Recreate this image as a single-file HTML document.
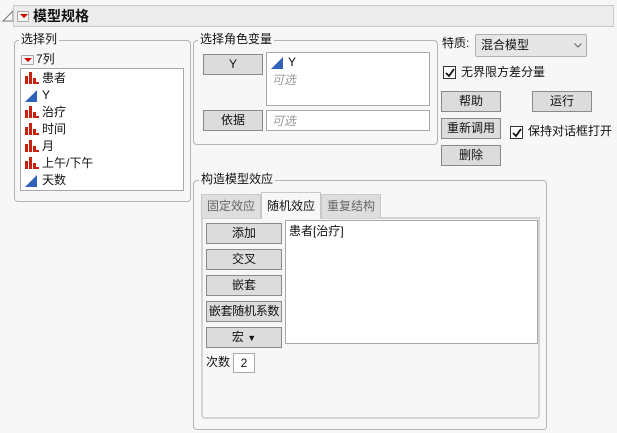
<!DOCTYPE html>
<html><head><meta charset="utf-8"><style>
*{box-sizing:border-box;margin:0;padding:0}
body{width:617px;height:433px;background:#f7f7f7;font-family:"Liberation Sans","Noto Sans CJK SC",sans-serif;font-size:12px;color:#111;position:relative;overflow:hidden}
.a{position:absolute}
.fs{position:absolute;border:1px solid #b4b4b4;border-radius:4px}
.lg{position:absolute;background:#f7f7f7;padding:0 2px;line-height:14px;font-size:12px}
.btn{position:absolute;background:#dcdcdc;border:1px solid #8a8a8a;text-align:center;line-height:18px;font-size:12px}
.box{position:absolute;background:#fff;border:1px solid #a8a8a8}
.rb{position:absolute;width:13px;height:10px;border:1px solid #aaa;background:#f4f4f4;border-radius:1px}
.rb:after{content:"";position:absolute;left:2px;top:2px;border-left:4px solid transparent;border-right:4px solid transparent;border-top:4px solid #c00}
.bar{position:absolute;width:14px;height:12px}
.cb{position:absolute;width:13px;height:13px;border:1px solid #333;background:#fff}
.item{position:absolute;left:22px;height:17px;line-height:17px}
.item span{position:absolute;left:20px;white-space:nowrap}
</style></head><body>
<!-- header -->
<svg class="a" style="left:2px;top:10px" width="12" height="12"><path d="M1 11 L11 11 L11 1 Z" fill="none" stroke="#777"/></svg>
<div class="a" style="left:13px;top:5px;width:601px;height:22px;background:#ececec;border:1px solid #c8c8c8"></div>
<div class="rb" style="left:17px;top:11px;width:12px;height:11px"></div>
<div class="a" style="left:33px;top:7px;font-size:14px;font-weight:bold;line-height:18px">模型规格</div>

<!-- 选择列 -->
<div class="fs" style="left:14px;top:40px;width:177px;height:162px"></div>
<div class="lg" style="left:19px;top:32px">选择列</div>
<div class="rb" style="left:21px;top:55px"></div>
<div class="a" style="left:36px;top:52px;line-height:14px">7列</div>
<div class="box" style="left:20px;top:68px;width:164px;height:123px"></div>
<svg width="0" height="0" style="position:absolute"><defs>
<g id="b"><rect x="0" y="4" width="3" height="8" fill="#c8220e"/><rect x="4" y="0" width="3" height="12" fill="#c8220e"/><rect x="8" y="6" width="3" height="6" fill="#c8220e"/><rect x="11" y="10" width="3" height="2" fill="#c8220e"/></g>
<g id="t"><path d="M0 12 L12 12 L12 0 Z" fill="#2f62b8"/></g></defs></svg>
<div class="item" style="top:70px"><svg class="a" style="left:3px;top:2px" width="14" height="12"><use href="#b"/></svg><span>患者</span></div>
<div class="item" style="top:87px"><svg class="a" style="left:3px;top:3px" width="14" height="12"><use href="#t"/></svg><span>Y</span></div>
<div class="item" style="top:104px"><svg class="a" style="left:3px;top:2px" width="14" height="12"><use href="#b"/></svg><span>治疗</span></div>
<div class="item" style="top:121px"><svg class="a" style="left:3px;top:2px" width="14" height="12"><use href="#b"/></svg><span>时间</span></div>
<div class="item" style="top:138px"><svg class="a" style="left:3px;top:2px" width="14" height="12"><use href="#b"/></svg><span>月</span></div>
<div class="item" style="top:155px"><svg class="a" style="left:3px;top:2px" width="14" height="12"><use href="#b"/></svg><span>上午/下午</span></div>
<div class="item" style="top:172px"><svg class="a" style="left:3px;top:3px" width="14" height="12"><use href="#t"/></svg><span>天数</span></div>

<!-- 选择角色变量 -->
<div class="fs" style="left:193px;top:40px;width:245px;height:105px"></div>
<div class="lg" style="left:198px;top:32px">选择角色变量</div>
<div class="btn" style="left:203px;top:54px;width:60px;height:21px">Y</div>
<div class="box" style="left:266px;top:52px;width:164px;height:54px"></div>
<svg class="a" style="left:271px;top:57px" width="12" height="12"><use href="#t"/></svg>
<div class="a" style="left:288px;top:55px;line-height:14px">Y</div>
<div class="a" style="left:272px;top:73px;color:#999;font-style:italic;line-height:14px">可选</div>
<div class="btn" style="left:203px;top:110px;width:60px;height:21px">依据</div>
<div class="box" style="left:266px;top:110px;width:164px;height:21px"></div>
<div class="a" style="left:272px;top:114px;color:#999;font-style:italic;line-height:14px">可选</div>

<!-- right -->
<div class="a" style="left:442px;top:36px;line-height:14px">特质:</div>
<div class="a" style="left:475px;top:34px;width:112px;height:23px;background:#e6e6e6;border:1px solid #b0b0b0;border-radius:2px"></div>
<div class="a" style="left:481px;top:38px;line-height:15px">混合模型</div>
<svg class="a" style="left:574px;top:43px" width="8" height="5"><path d="M0.5 0.5 L4 4 L7.5 0.5" fill="none" stroke="#666"/></svg>
<div class="cb" style="left:443px;top:66px"></div>
<svg class="a" style="left:445px;top:68px" width="10" height="10"><path d="M1 5 L4 8 L9 1" fill="none" stroke="#111" stroke-width="1.8"/></svg>
<div class="a" style="left:461px;top:65px;line-height:14px">无界限方差分量</div>
<div class="btn" style="left:441px;top:91px;width:60px;height:21px">帮助</div>
<div class="btn" style="left:532px;top:91px;width:60px;height:21px">运行</div>
<div class="btn" style="left:441px;top:118px;width:60px;height:21px">重新调用</div>
<div class="cb" style="left:510px;top:126px"></div>
<svg class="a" style="left:512px;top:128px" width="10" height="10"><path d="M1 5 L4 8 L9 1" fill="none" stroke="#111" stroke-width="1.8"/></svg>
<div class="a" style="left:528px;top:124px;line-height:14px">保持对话框打开</div>
<div class="btn" style="left:441px;top:145px;width:60px;height:21px">删除</div>

<!-- 构造模型效应 -->
<div class="fs" style="left:193px;top:180px;width:354px;height:250px"></div>
<div class="lg" style="left:199px;top:172px">构造模型效应</div>
<div class="a" style="left:201px;top:217px;width:339px;height:202px;border:2px solid #d4d4d4;border-radius:0 0 4px 4px;background:#f7f7f7"></div>
<div class="a" style="left:201px;top:194px;width:60px;height:24px;background:#dedede;border:1px solid #c8c8c8;border-bottom:none;color:#666;text-align:center;line-height:22px">固定效应</div>
<div class="a" style="left:261px;top:192px;width:60px;height:27px;background:#f7f7f7;border:1px solid #c8c8c8;border-bottom:none;text-align:center;line-height:27px">随机效应</div>
<div class="a" style="left:321px;top:194px;width:60px;height:24px;background:#dedede;border:1px solid #c8c8c8;border-bottom:none;color:#666;text-align:center;line-height:22px">重复结构</div>
<div class="btn" style="left:206px;top:223px;width:76px;height:21px">添加</div>
<div class="btn" style="left:206px;top:249px;width:76px;height:21px">交叉</div>
<div class="btn" style="left:206px;top:275px;width:76px;height:21px">嵌套</div>
<div class="btn" style="left:206px;top:301px;width:76px;height:21px;letter-spacing:-0.3px">嵌套随机系数</div>
<div class="btn" style="left:206px;top:327px;width:76px;height:21px">宏 <span style="font-size:9px">▼</span></div>
<div class="box" style="left:285px;top:220px;width:253px;height:124px"></div>
<div class="a" style="left:289px;top:224px;line-height:14px">患者[治疗]</div>
<div class="a" style="left:206px;top:355px;line-height:14px">次数</div>
<div class="box" style="left:233px;top:353px;width:22px;height:20px;text-align:center;line-height:18px">2</div>
</body></html>
